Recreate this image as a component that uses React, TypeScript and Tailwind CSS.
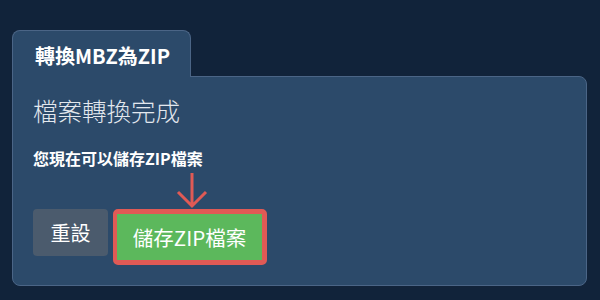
import React from "react";

const font = { fontFamily: '"Noto Sans CJK TC", "Noto Sans", sans-serif' };

export default function App() {
  return (
    <div className="w-[600px] h-[300px] bg-[#11233a] pt-[30px] pl-[12px] pr-[13px]" style={font}>
      <div className="relative z-10 -mb-px w-[179px] h-[47px] bg-[#2c4a6a] border border-b-0 border-[#4b6586] rounded-t-[8px] flex items-center pl-[22px] pt-[3px]">
        <span className="text-[20px] font-bold text-white leading-none">轉換MBZ為ZIP</span>
      </div>
      <div className="h-[210px] bg-[#2c4a6a] border border-[#4b6586] rounded-b-[8px] rounded-tr-[8px] px-[20px] pt-[19px]">
        <div className="text-[24.5px] leading-[29px] text-[#e3e8ee] font-light">檔案轉換完成</div>
        <div className="mt-[24px] text-[16px] leading-[19px] font-bold text-white">您現在可以儲存ZIP檔案</div>
        <div className="mt-[41px] flex items-start">
          <button className="w-[75px] h-[47px] rounded-[4px] bg-[#4b5b6d] text-white text-[20px] flex items-center justify-center">
            重設
          </button>
          <div className="relative ml-[5px] border-[5px] border-l-[4px] border-[#e05a55] rounded-[5px]">
            <svg className="absolute left-[58px] top-[-42px]" width="34" height="38" viewBox="0 0 34 38">
              <path d="M17 1 V34 M3 20 L17 34 L31 20" fill="none" stroke="#e05a55" strokeWidth="3" />
            </svg>
            <button className="w-[145px] h-[46px] bg-[#5cb85c] text-white text-[20.5px] flex items-center justify-center">
              儲存ZIP檔案
            </button>
          </div>
        </div>
      </div>
    </div>
  );
}
